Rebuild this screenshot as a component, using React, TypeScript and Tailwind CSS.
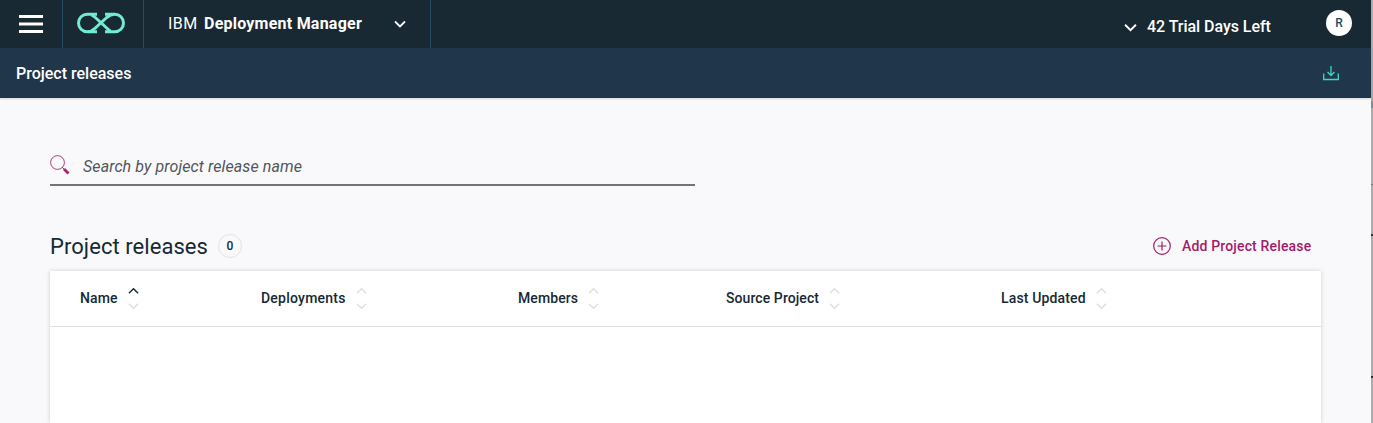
const sans = "font-[Roboto,'Liberation_Sans',sans-serif]";

function Chevron({ up = false, className = "" }: { up?: boolean; className?: string }) {
  return (
    <svg viewBox="0 0 12 8" className={className} fill="none" stroke="currentColor">
      <path d={up ? "M1 6.5 6 1.5l5 5" : "M1 1.5 6 6.5l5-5"} />
    </svg>
  );
}

function Logo() {
  return (
    <svg width="48" height="22" viewBox="0 0 48 22" fill="none" stroke="#71ecd3" strokeWidth="3" className="shrink-0">
      <path d="M20 2.200H10.300a8.800 8.800 0 0 0 0 17.600c3.500 0 5.700-1.500 8-3.800L29.700 5.500C32 3.500 34 2.200 37.700 2.200a8.800 8.800 0 0 1 0 17.600H28" />
      <path d="M14.500 2.800c1.500.700 2.700 1.700 3.800 2.700L29.700 16c1.100 1.200 2.400 2.200 3.800 3" />
      <path d="M11 19.800h9M37 2.200h-9" />
    </svg>
  );
}

function Column({ label, width, track, active = false }: { label: string; width: string; track: string; active?: boolean }) {
  return (
    <div className={`flex shrink-0 items-center gap-[10px] ${width}`}>
      <span className={`mb-[2px] whitespace-nowrap text-[14px] font-medium leading-5 text-[#152935] ${track}`}>{label}</span>
      <span className="flex flex-col gap-[7px] text-[#dfdfdf]">
        <Chevron up className={`h-[8px] w-[11px] stroke-[1.5] ${active ? "text-[#152935]" : ""}`} />
        <Chevron className="h-[8px] w-[11px] stroke-[1.5]" />
      </span>
    </div>
  );
}

export default function App() {
  return (
    <div className={`flex h-[423px] w-[1373px] overflow-hidden ${sans}`}>
      <div className="flex w-[1371px] shrink-0 flex-col bg-[#f9f9fb]">
        <header className="flex h-12 shrink-0 items-center bg-[#182933] text-white">
          <button className="flex h-12 w-[63px] shrink-0 items-center border-r border-[#264a60] pl-[19px]" aria-label="Menu">
            <svg width="24" height="18" viewBox="0 0 24 18" fill="white">
              <path d="M0 0h24v3H0zM0 7.500h24v3H0zM0 15h24v3H0z" />
            </svg>
          </button>
          <div className="flex h-12 w-[81px] shrink-0 items-center border-r border-[#264a60] pb-[2px] pl-[14px]">
            <Logo />
          </div>
          <div className="flex h-12 w-[287px] shrink-0 items-center border-r border-[#264a60] pl-6">
            <div className="flex w-[225.500px] whitespace-nowrap text-[16px] leading-6">
              <span className="w-[36px] tracking-[0.5px]">IBM</span>
              <span className="font-bold tracking-[0.23px]">Deployment Manager</span>
            </div>
            <Chevron className="h-[8px] w-[12px] stroke-[1.8]" />
          </div>
          <div className="ml-auto flex items-center pr-[19px]">
            <Chevron className="mt-[7px] h-[9px] w-[13px] stroke-[1.8]" />
            <span className="ml-[10px] mt-[5px] w-[124px] whitespace-nowrap text-[16px] font-medium leading-6 tracking-[-0.04px]">42 Trial Days Left</span>
            <span className="mb-[2px] ml-[55px] flex size-[26px] items-center justify-center rounded-full bg-white text-[12px] font-medium text-[#264a60]">R</span>
          </div>
        </header>
        <div className="z-10 flex h-[50px] shrink-0 items-center justify-between bg-[#20364a] pl-4 pr-[32px] text-white shadow-[0_1px_2px_rgba(0,0,0,0.15)]">
          <h1 className="mt-[2px] whitespace-nowrap text-[16px] font-medium leading-6">Project releases</h1>
          <svg width="16" height="16" viewBox="0 0 16 16" fill="none" stroke="#41d6c3" strokeWidth="1.300">
            <path d="M.700 8.500v6h14.600v-6M8 1v9.500M4.500 7 8 10.500 11.500 7" />
          </svg>
        </div>
        <main className="flex flex-1 flex-col pl-[50px] pr-[50px]">
          <label className="mt-[50px] flex h-[38px] w-[645px] shrink-0 items-center border-b-2 border-[#747477]">
            <svg width="20" height="20" viewBox="0 0 20 20" fill="none" stroke="#a6266e" className="mb-[3px]">
              <circle cx="7.500" cy="7.500" r="6.900" strokeWidth="0.900" />
              <path d="m12.300 12.300 2 2" />
              <path d="m14 14 4.500 4.500" strokeWidth="2.800" />
            </svg>
            <span className="ml-[13px] mt-[2px] whitespace-nowrap text-[16px] italic leading-6 tracking-[0.1px] text-[#50565b]">Search by project release name</span>
          </label>
          <div className="mt-[46px] flex h-[28px] shrink-0 items-center">
            <h2 className="mt-[2px] w-[168px] whitespace-nowrap text-[22px] leading-7 tracking-[0.06px] text-[#152935]">Project releases</h2>
            <span className="flex size-6 items-center justify-center rounded-full border border-[#dfe3e6] text-[12px] font-medium text-[#152935]">0</span>
            <button className="ml-auto flex items-center gap-[11px] pr-[10px] text-[#a11c69]">
              <svg width="18" height="18" viewBox="0 0 18 18" fill="none" stroke="currentColor" strokeWidth="1.200">
                <circle cx="9" cy="9" r="8.300" />
                <path d="M9 4.500v9M4.500 9h9" />
              </svg>
              <span className="w-[129px] whitespace-nowrap text-left text-[14px] font-medium leading-5 tracking-[0.16px]">Add Project Release</span>
            </button>
          </div>
          <section className="mt-[11px] flex-1 bg-white shadow-[0_0_4px_rgba(0,0,0,0.18)]">
            <div className="flex h-[56px] items-center border-b border-[#dfdfdf] pl-[30px]">
              <Column label="Name" width="w-[181px]" track="tracking-[0.15px]" active />
              <Column label="Deployments" width="w-[257px]" track="tracking-[0.23px]" />
              <Column label="Members" width="w-[208px]" track="tracking-[0.1px]" />
              <Column label="Source Project" width="w-[275px]" track="tracking-[0.08px]" />
              <Column label="Last Updated" width="w-[120px]" track="tracking-[0.15px]" />
            </div>
          </section>
        </main>
      </div>
      <div className="flex w-[2px] shrink-0 flex-col bg-[#aaa]">
        <div className="mt-[101px] h-[7px] bg-[#858990]" />
        <div className="mt-[76px] h-px bg-[#777]" />
        <div className="mt-[49px] h-[2px] bg-[#20313d]" />
        <div className="mt-[140px] h-[2px] bg-[#20313d]" />
      </div>
    </div>
  );
}
